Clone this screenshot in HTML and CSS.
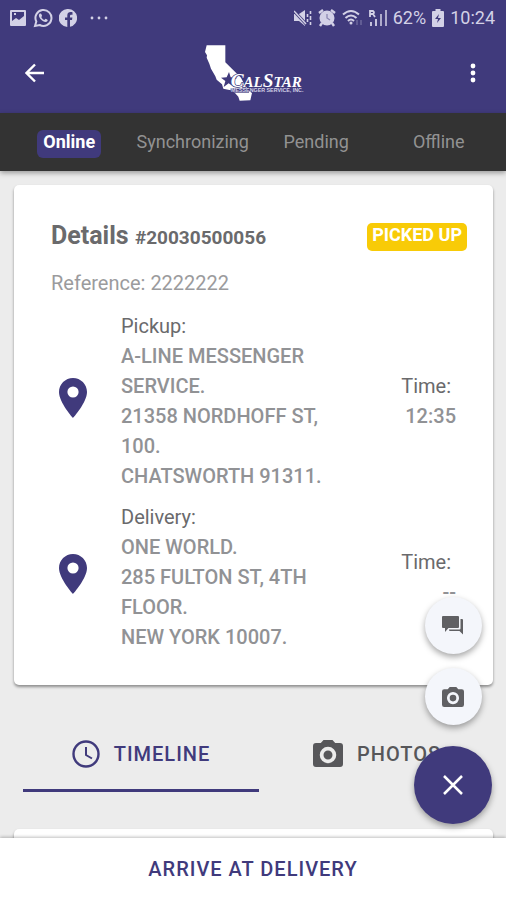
FILE: index.html
```html
<!DOCTYPE html>
<html lang="en">
<head>
<meta charset="utf-8">
<meta name="viewport" content="width=device-width, initial-scale=1">
<title>Order details</title>
<link rel="stylesheet" href="styles.css">
</head>
<body>
<svg class="sprite" aria-hidden="true">
  <symbol id="camera" viewBox="2 2 20 18"><path fill-rule="evenodd" d="M9 2 7.200 4H4a2 2 0 0 0-2 2v12a2 2 0 0 0 2 2h16a2 2 0 0 0 2-2V6a2 2 0 0 0-2-2h-3.200L15 2zm3 4.500a5.500 5.500 0 1 1 0 11 5.500 5.500 0 0 1 0-11zm0 2.500a3 3 0 1 0 0 6 3 3 0 0 0 0-6z"/></symbol>
  <symbol id="pin" viewBox="5 2 14 20"><path fill-rule="evenodd" d="M12 2C8.130 2 5 5.130 5 9c0 5.250 7 13 7 13s7-7.750 7-13c0-3.870-3.130-7-7-7zm0 4.200a2.800 2.800 0 1 1 0 5.600 2.800 2.800 0 0 1 0-5.600z"/></symbol>
</svg>
<header class="top">
  <div class="status">
    <div class="status-left">
      <svg width="18" height="18" viewBox="0 0 18 18"><path fill-rule="evenodd" d="M2 1h14a1 1 0 0 1 1 1v14a1 1 0 0 1-1 1H2a1 1 0 0 1-1-1V2a1 1 0 0 1 1-1zm1 2v9l4-3 3 2 5-4V3zm2 1h2v2H5z"/></svg>
      <svg width="20" height="20" viewBox="0 0 20 20"><path d="M2 18l1.300-4.500A8 8 0 1 1 6.700 17z" fill="none" stroke="currentColor" stroke-width="2"/><path d="M7 5.500c-2 1-1 4 1 6s5 3.500 6.500 1.500c.7-1-.2-1.400-2-2.200l-1.200 1.100c-1.500-.6-2.500-1.600-3-3l.8-1C8.600 6.500 8.200 5 7 5.500z"/></svg>
      <svg width="18" height="18" viewBox="0 0 18 18"><path fill-rule="evenodd" d="M9 0a9 9 0 0 1 2 17.800V11h2l.4-2.500H11V7c0-1 .5-1.300 1.300-1.300h1.200V3.300C11 2.700 8.300 3 8.300 6.500v2H6V11h2.300v7A9 9 0 0 1 9 0z"/></svg>
      <svg class="more" width="18" height="4" viewBox="0 0 18 4"><circle cx="2" cy="2" r="1.400"/><circle cx="9" cy="2" r="1.400"/><circle cx="16" cy="2" r="1.400"/></svg>
    </div>
    <div class="status-right">
      <svg class="mute" width="18" height="18" viewBox="0 0 18 18"><path d="M0 5h5l6-4v16l-6-5H0z"/><path d="M0 2l12 13" stroke="#403a7c" stroke-width="3"/><path d="M0 2l12 13" stroke="currentColor" stroke-width="1.500"/><path d="M13.500 5v3M13.500 10v3M16.500 2v3M16.500 7v4M16.500 13v3" fill="none" stroke="currentColor" stroke-width="1.600"/></svg>
      <svg width="18" height="18" viewBox="0 0 18 18"><path d="M1 4l4-3M17 4l-4-3M4 14l-2 3M14 14l2 3" stroke="currentColor" stroke-width="2.400"/><circle cx="9" cy="9" r="7.500"/><path d="M9 5v4l3 2" fill="none" stroke="#8b87b3" stroke-width="1.300"/></svg>
      <svg class="wifi" width="21" height="18" viewBox="0 0 21 18"><path d="M1 5.500q8-7 16 0M3.500 9q5.500-5 11 0M6 12q3-3 6 0" fill="none" stroke="currentColor" stroke-width="2"/><circle cx="9" cy="14" r="1.500"/><path d="M15 11v5M19 16v-5" stroke="currentColor" stroke-width="1.500" opacity=".3"/></svg>
      <svg width="18" height="18" viewBox="0 0 18 18"><path d="M1 8V2h3q2 1.500 0 3H1M4 5l2 3M2 17v-4M7 17v-7" fill="none" stroke="currentColor" stroke-width="1.800"/><path d="M12 17V5M17 17V1" stroke="currentColor" stroke-width="2" opacity=".75"/></svg>
      <span>62%</span>
      <svg width="12" height="18" viewBox="0 0 12 18"><path d="M3.500 0h5v2H11a1 1 0 0 1 1 1v14a1 1 0 0 1-1 1H1a1 1 0 0 1-1-1V3a1 1 0 0 1 1-1h2.500z"/><path d="M7 5 3 10h3l-1 4 4-5H6z" fill="#403a7c"/></svg>
      <span class="clock">10:24</span>
    </div>
  </div>
  <div class="bar">
    <button class="icon-btn" aria-label="Back"><svg width="20" height="20" viewBox="0 0 20 20"><path d="M19 10H2M10 1.500 1.500 10l8.500 8.500" fill="none" stroke="currentColor" stroke-width="2.400"/></svg></button>
    <svg class="logo" width="100" height="58" viewBox="27 21 300 174" role="img" aria-label="CalStar">
      <path d="M32 25H88V76L135 122 144 140 160 163 168 168 163 190 131 191 127 179 117 168 104 160 82 155 78 142 62 128 58 118 45 95 40 80 32 62 33 55 27 45z" fill="#fff"/>
      <path d="M99 105l5 16 20 1-15 10 5 18-16-11-15 11 5-18-13-10 17-1z" fill="#403a7c"/>
      <text class="logo-name" x="104" y="149">C<tspan class="small-cap">AL</tspan>S<tspan class="small-cap">TAR</tspan></text>
      <path d="M104 154h55v13h-55z" fill="#403a7c"/>
      <text class="logo-sub" x="105" y="166">MESSENGER SERVICE, INC.</text>
    </svg>
    <button class="icon-btn" aria-label="More options"><svg width="6" height="20" viewBox="0 0 6 20"><circle cx="3" cy="3" r="2.400"/><circle cx="3" cy="10" r="2.400"/><circle cx="3" cy="17" r="2.400"/></svg></button>
  </div>
</header>
<nav class="modes">
  <button class="active"><span>Online</span></button>
  <button><span>Synchronizing</span></button>
  <button><span>Pending</span></button>
  <button><span>Offline</span></button>
</nav>
<main>
  <section class="card">
    <div class="card-head">
      <h1>Details <small>#20030500056</small></h1>
      <span class="badge">PICKED UP</span>
    </div>
    <p class="reference">Reference: 2222222</p>
    <div class="stop">
      <svg class="pin" width="28" height="40"><use href="#pin"/></svg>
      <div class="address"><h2>Pickup:</h2><p>A-LINE MESSENGER SERVICE.<br>21358 NORDHOFF ST, 100.<br>CHATSWORTH 91311.</p></div>
      <div class="time"><h2>Time:&nbsp;</h2><p>12:35</p></div>
    </div>
    <div class="stop">
      <svg class="pin" width="28" height="40"><use href="#pin"/></svg>
      <div class="address"><h2>Delivery:</h2><p>ONE WORLD.<br>285 FULTON ST, 4TH FLOOR.<br>NEW YORK 10007.</p></div>
      <div class="time"><h2>Time:&nbsp;</h2><p>--</p></div>
    </div>
  </section>
  <div class="views">
    <button class="active"><svg width="28" height="28" viewBox="0 0 28 28"><circle cx="14" cy="14" r="12.500" fill="none" stroke="currentColor" stroke-width="2.400"/><path d="M14 7v8l6 3.500" fill="none" stroke="currentColor" stroke-width="2"/></svg>TIMELINE</button>
    <button><svg width="30" height="27"><use href="#camera"/></svg>PHOTOS</button>
  </div>
  <section class="card next"></section>
</main>
<footer><button>ARRIVE AT DELIVERY</button></footer>
<div class="fabs">
  <button aria-label="Messages"><svg width="22" height="19" viewBox="0 0 22 19"><path d="M1 0h15a1 1 0 0 1 1 1v10a1 1 0 0 1-1 1H6.500L3 16v-4H1a1 1 0 0 1-1-1V1a1 1 0 0 1 1-1z"/><path d="M18.500 3H20a1 1 0 0 1 1 1v14.500L17.500 15H8a1 1 0 0 1-1-1v-.5h10.500a1 1 0 0 0 1-1z"/></svg></button>
  <button aria-label="Take photo"><svg width="22" height="20"><use href="#camera"/></svg></button>
  <button class="main-fab" aria-label="Close menu"><svg width="20" height="20" viewBox="0 0 20 20"><path d="M1 1l18 18M19 1 1 19" fill="none" stroke="currentColor" stroke-width="2.500"/></svg></button>
</div>
</body>
</html>
```
FILE: styles.css
```css
:root {
  --purple: #403a7c;
  --gray: #919295;
}
* { box-sizing: border-box; }
body {
  margin: 0;
  height: 100vh;
  display: flex;
  flex-direction: column;
  overflow: hidden;
  background: #ececec;
  font: 18px/30px Roboto, sans-serif;
  color: #6a6a6c;
}
button {
  margin: 0;
  padding: 0;
  border: 0;
  background: none;
  font: inherit;
  color: inherit;
  cursor: pointer;
}
svg { display: block; fill: currentColor; flex: none; }
h1, h2, p { margin: 0; }
.sprite { position: absolute; width: 0; height: 0; }

.top { background: var(--purple); color: #fff; }
.status {
  display: flex;
  justify-content: space-between;
  align-items: center;
  height: 36px;
  padding: 0 11px 0 9px;
  color: #d3d1e6;
}
.status-left, .status-right { display: flex; align-items: center; gap: 6px; }
.more { margin-left: 7px; }
.bar {
  display: flex;
  justify-content: space-between;
  align-items: center;
  height: 77px;
  padding: 0 21px 3px 25px;
}
.icon-btn { display: flex; justify-content: center; width: 24px; }
.icon-btn:first-child { justify-content: flex-start; }
.logo-name {
  font: italic bold 58px "Liberation Serif", serif;
  fill: #fff;
  stroke: var(--purple);
  stroke-width: 4px;
  paint-order: stroke;
}
.small-cap { font-size: 45px; }
.logo-sub { font: bold 16px "Liberation Sans", sans-serif; fill: #d3d1e6; }

.modes {
  position: relative;
  display: grid;
  grid-template-columns: repeat(4, 1fr);
  height: 58px;
  padding: 4px 6px 0 8px;
  background: #333;
  color: #929292;
  box-shadow: 0 2px 5px rgba(0, 0, 0, .35);
}
.modes button { display: flex; justify-content: center; align-items: center; }
.modes span { padding: 0 6px 4px; line-height: 24px; border-radius: 6px; }
.modes .active { color: #fff; font-weight: bold; }
.modes .active span { background: var(--purple); }

main { flex: 1; min-height: 0; overflow: hidden; padding: 14px 13px 0 14px; }
.card {
  background: #fff;
  border-radius: 5px;
  padding: 36px 26px 33px 37px;
  box-shadow: 0 2px 3px rgba(0, 0, 0, .4);
}
.card-head { display: flex; justify-content: space-between; align-items: center; }
h1 { font-size: 25px; font-weight: bold; }
h1 small { font-size: 19px; font-weight: bold; }
.badge {
  padding: 0 5px 4px;
  border-radius: 5px;
  background: #f8cb07;
  color: #fff;
  font-weight: bold;
  line-height: 24px;
}
.reference { margin: 15px 0 13px; font-size: 20px; color: #9b9b9d; }
.stop {
  display: grid;
  grid-template-columns: 70px 1fr 120px;
  align-items: center;
  padding-right: 11px;
  font-size: 20px;
}
.stop + .stop { margin-top: 11px; }
.pin { margin: 0 0 6px 8px; color: var(--purple); }
h2 { font-size: 20px; font-weight: normal; }
.stop p { color: var(--gray); font-weight: 500; }
.time { text-align: right; }

.views { display: grid; grid-template-columns: 1fr 1fr; margin: 33px -2px 37px 9px; }
.views button {
  display: flex;
  justify-content: center;
  align-items: center;
  gap: 14px;
  height: 74px;
  border-bottom: 3px solid transparent;
  font-weight: 500;
  font-size: 20px;
  letter-spacing: 1px;
  color: #57575a;
}
.views .active { color: var(--purple); border-color: var(--purple); }
.next { height: 60px; }

footer {
  position: relative;
  display: flex;
  height: 62px;
  background: #fff;
  box-shadow: 0 -1px 3px rgba(0, 0, 0, .25);
}
footer button {
  flex: 1;
  color: var(--purple);
  font-size: 20px;
  font-weight: 500;
  letter-spacing: 1px;
}
.fabs {
  position: fixed;
  right: 14px;
  bottom: 76px;
  display: flex;
  flex-direction: column;
  align-items: center;
  gap: 14px;
}
.fabs button {
  display: grid;
  place-items: center;
  width: 57px;
  height: 57px;
  border-radius: 50%;
  background: #f4f6fb;
  color: #606063;
  box-shadow: 0 3px 6px rgba(0, 0, 0, .35);
}
.fabs .main-fab {
  width: 78px;
  height: 78px;
  margin-top: 7px;
  background: var(--purple);
  color: #fff;
}
```
